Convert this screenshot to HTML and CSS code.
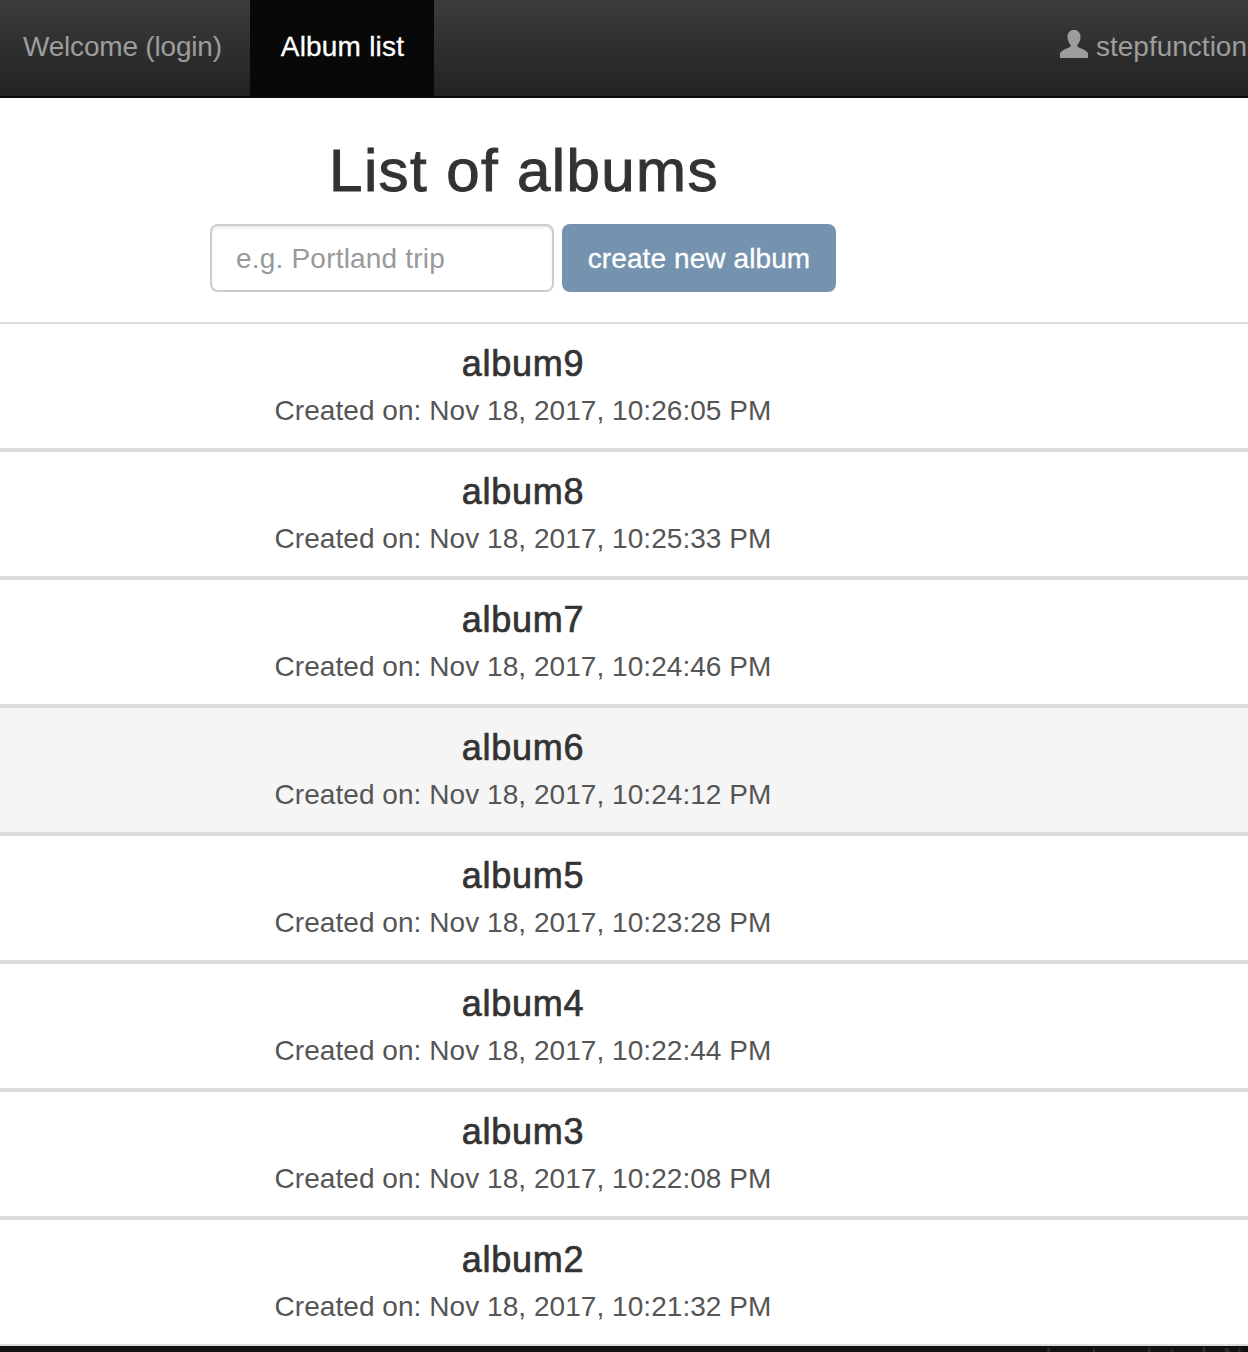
FILE: index.html
```html
<!DOCTYPE html>
<html>

<head>
    <title>Album list</title>
    <link rel="stylesheet" href="styles.css">
</head>

<body>
    <!-- Navbar -->
    <nav class="navbar">
        <a href="#" class="nav-link">Welcome (login)</a>
        <a href="#" class="nav-link active">Album list</a>
        <a href="#" class="nav-user">
            <svg class="user-icon" viewBox="0 0 28 28" width="28" height="28">
                <path d="M14 0c4 0 6.500 2.700 6.500 7 0 3-1 5.500-2.600 7.300-.8.900-.7 2.300.5 2.900 3.300 1.500 8.400 3.300 9.600 6v4.800H0v-4.800c1.200-2.700 6.300-4.500 9.600-6 1.200-.6 1.300-2 .5-2.900C8.500 12.500 7.500 10 7.500 7c0-4.300 2.500-7 6.500-7z"/>
            </svg>
            stepfunctions
        </a>
    </nav>

    <div class="container">
        <h1>List of albums</h1>
        <form class="album-form">
            <input type="text" class="album-input" placeholder="e.g. Portland trip">
            <button type="button" class="album-button">create new album</button>
        </form>
    </div>

    <div class="album-list">
        <a href="#" class="album-item">
            <h4>album9</h4>
            <p>Created on: Nov 18, 2017, 10:26:05 PM</p>
        </a>
        <a href="#" class="album-item">
            <h4>album8</h4>
            <p>Created on: Nov 18, 2017, 10:25:33 PM</p>
        </a>
        <a href="#" class="album-item">
            <h4>album7</h4>
            <p>Created on: Nov 18, 2017, 10:24:46 PM</p>
        </a>
        <a href="#" class="album-item hovered">
            <h4>album6</h4>
            <p>Created on: Nov 18, 2017, 10:24:12 PM</p>
        </a>
        <a href="#" class="album-item">
            <h4>album5</h4>
            <p>Created on: Nov 18, 2017, 10:23:28 PM</p>
        </a>
        <a href="#" class="album-item">
            <h4>album4</h4>
            <p>Created on: Nov 18, 2017, 10:22:44 PM</p>
        </a>
        <a href="#" class="album-item">
            <h4>album3</h4>
            <p>Created on: Nov 18, 2017, 10:22:08 PM</p>
        </a>
        <a href="#" class="album-item">
            <h4>album2</h4>
            <p>Created on: Nov 18, 2017, 10:21:32 PM</p>
        </a>
    </div>

    <!-- Footer, cut off by the window -->
    <footer class="footer">Last updated: Nov 18</footer>
</body>

</html>
```

FILE: styles.css
```css
html,
body {
    height: 1352px;
    overflow: hidden;
}

body {
    font-family: "Liberation Sans", Arial, sans-serif;
    background-color: #ffffff;
    color: #333333;
    margin: 0;
    padding: 0;
}

/* Navbar */
.navbar {
    display: flex;
    height: 96px;
    border-bottom: 2px solid #080808;
    background-image: linear-gradient(to bottom, #3c3c3c, #222222);
}

.nav-link {
    display: flex;
    align-items: center;
    height: 96px;
    padding: 0 28px 2px 23px;
    box-sizing: border-box;
    font-size: 28px;
    letter-spacing: -0.2px;
    color: #9d9d9d;
    text-decoration: none;
    white-space: nowrap;
}

.nav-link.active {
    padding: 0 30px 2px 31px;
    letter-spacing: 0.2px;
    background-color: #080808;
    color: #ffffff;
    -webkit-text-stroke: 0.3px #ffffff;
}

.nav-user {
    display: flex;
    align-items: center;
    gap: 8px;
    height: 96px;
    margin-left: auto;
    margin-right: -13px;
    padding-bottom: 2px;
    box-sizing: border-box;
    font-size: 28px;
    color: #9d9d9d;
    text-decoration: none;
    white-space: nowrap;
}

.user-icon {
    fill: #9d9d9d;
    margin-bottom: 6px;
}

/* Form Section */
.container {
    display: flex;
    flex-direction: column;
    align-items: center;
    padding-right: 202px;
    height: 226px;
    box-sizing: border-box;
    border-bottom: 2px solid #dddddd;
}

h1 {
    font-size: 60px;
    font-weight: 500;
    line-height: 66px;
    letter-spacing: 1.4px;
    margin: 40px 0 20px 2px;
    -webkit-text-stroke: 1px #333333;
}

.album-form {
    display: flex;
    gap: 8px;
}

.album-input {
    width: 344px;
    height: 68px;
    padding: 14px 24px 12px;
    border: 2px solid #cccccc;
    border-radius: 8px;
    box-sizing: border-box;
    font-family: inherit;
    font-size: 28px;
    letter-spacing: 0.2px;
    color: #333333;
    box-shadow: inset 0 2px 2px rgba(0, 0, 0, 0.075);
}

.album-input::placeholder {
    color: #999999;
}

.album-button {
    width: 274px;
    height: 68px;
    border: none;
    border-radius: 8px;
    background-color: #7593af;
    color: #ffffff;
    font-family: inherit;
    font-size: 28px;
    letter-spacing: 0.1px;
    padding: 2px 0 0;
    -webkit-text-stroke: 0.3px #ffffff;
}

/* Album list */
.album-item {
    display: block;
    height: 104px;
    padding: 20px 202px 0 0;
    border-bottom: 4px solid #dddddd;
    text-align: center;
    text-decoration: none;
}

.album-item:last-child {
    border-bottom-width: 2px;
}

.album-item.hovered {
    background-color: #f5f5f5;
}

.album-item h4 {
    margin: 0 0 7px;
    font-size: 36px;
    font-weight: 500;
    line-height: 40px;
    letter-spacing: 0.7px;
    color: #333333;
    -webkit-text-stroke: 0.7px #333333;
}

.album-item p {
    margin: 0;
    font-size: 28px;
    line-height: 40px;
    letter-spacing: 0.05px;
    color: #555555;
}

/* Footer */
.footer {
    height: 6px;
    overflow: hidden;
    background-color: #111111;
    padding-left: 1045px;
    font-size: 28px;
    line-height: 24px;
    color: #2b2b2b;
    white-space: nowrap;
}
```
